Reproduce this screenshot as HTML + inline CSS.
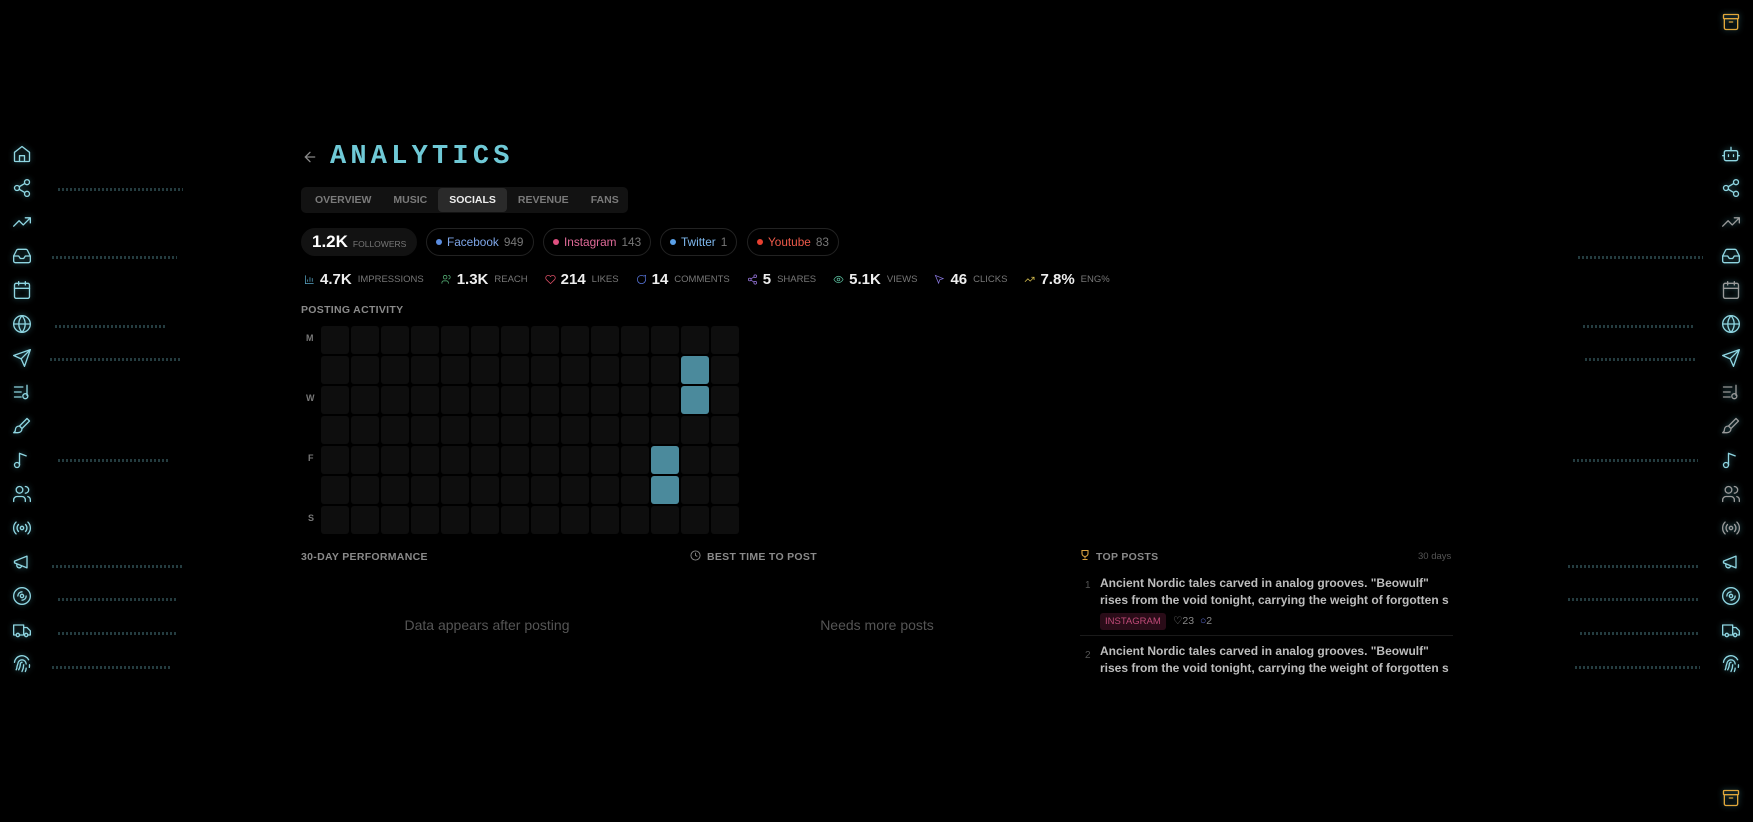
<!DOCTYPE html>
<html><head><meta charset="utf-8"><style>
*{margin:0;padding:0;box-sizing:border-box}
body{width:1753px;height:822px;background:#000;font-family:"Liberation Sans",sans-serif;color:#ddd;position:relative;overflow:hidden}
.abs{position:absolute}
.side svg{position:absolute;width:20px;height:20px;fill:none;stroke:#8fd6e2;stroke-width:1.6;stroke-linecap:round;stroke-linejoin:round;filter:drop-shadow(0 0 3px rgba(90,200,220,.5))}
.title{left:330px;top:142px;font-family:"Liberation Mono",monospace;font-weight:bold;font-size:27px;letter-spacing:4.2px;color:#6fc9d6}
.tabs{left:301px;top:187px;width:327px;height:26px;background:#121212;border-radius:5px;display:flex;align-items:center;padding:0 3px}
.tabs div{font-size:10.5px;font-weight:bold;color:#7a7a7a;padding:6px 11px;border-radius:4px}
.tabs .on{background:#2a2a2a;color:#eee}
.pill{top:228px;height:28px;border:1px solid #222;border-radius:14px;display:flex;align-items:center;padding:0 9px;font-size:11.8px;gap:5px}
.pill i{width:6px;height:6px;border-radius:50%;display:inline-block}
.pill span.n{color:#777}
.stats{left:304px;top:271px;display:flex;align-items:center;font-size:9.5px;color:#777}
.stats b{color:#eee;font-size:15px;margin:0 6px 0 5px}
.stats .s{display:flex;align-items:center;margin-right:17px}
.stats svg{width:11px;height:11px;fill:none;stroke-width:1.6}
.lbl{font-size:10.5px;font-weight:bold;color:#8a8a8a;letter-spacing:.3px}
.cell{position:absolute;width:28px;height:28px;background:#0e0e0e;border-radius:3px}
.hl{background:#4b8a9c}
.post{font-size:12px;font-weight:bold;color:#bdbdbd;line-height:17px;white-space:nowrap;overflow:hidden;width:353px}
.glow{position:absolute;height:3px;background:repeating-linear-gradient(90deg,rgba(120,200,210,.3) 0 2px,transparent 2px 4px)}
</style></head><body>

<div class="glow" style="left:58px;top:188px;width:125px"></div>
<div class="glow" style="left:52px;top:256px;width:125px"></div>
<div class="glow" style="left:55px;top:325px;width:110px"></div>
<div class="glow" style="left:50px;top:358px;width:130px"></div>
<div class="glow" style="left:58px;top:459px;width:110px"></div>
<div class="glow" style="left:52px;top:565px;width:130px"></div>
<div class="glow" style="left:58px;top:598px;width:120px"></div>
<div class="glow" style="left:58px;top:632px;width:120px"></div>
<div class="glow" style="left:52px;top:666px;width:120px"></div>
<div class="glow" style="left:1578px;top:256px;width:125px"></div>
<div class="glow" style="left:1583px;top:325px;width:110px"></div>
<div class="glow" style="left:1585px;top:358px;width:110px"></div>
<div class="glow" style="left:1573px;top:459px;width:125px"></div>
<div class="glow" style="left:1568px;top:565px;width:130px"></div>
<div class="glow" style="left:1568px;top:598px;width:130px"></div>
<div class="glow" style="left:1580px;top:632px;width:120px"></div>
<div class="glow" style="left:1575px;top:666px;width:125px"></div>

<div class="side">
<svg style="left:12px;top:144px" viewBox="0 0 24 24"><path d="M3 10l9-7 9 7v10a1 1 0 0 1-1 1H4a1 1 0 0 1-1-1z"/><path d="M9 21v-7h6v7"/></svg>
<svg style="left:12px;top:178px" viewBox="0 0 24 24"><circle cx="18" cy="5" r="3"/><circle cx="6" cy="12" r="3"/><circle cx="18" cy="19" r="3"/><path d="M8.6 13.5l6.8 4M15.4 6.5l-6.8 4"/></svg>
<svg style="left:12px;top:212px" viewBox="0 0 24 24"><path d="M22 7l-8.5 8.5-5-5L2 17M16 7h6v6"/></svg>
<svg style="left:12px;top:246px" viewBox="0 0 24 24"><path d="M22 12h-6l-2 3h-4l-2-3H2"/><path d="M5.5 5.1L2 12v6a2 2 0 0 0 2 2h16a2 2 0 0 0 2-2v-6l-3.5-6.9A2 2 0 0 0 16.8 4H7.2a2 2 0 0 0-1.7 1.1z"/></svg>
<svg style="left:12px;top:280px" viewBox="0 0 24 24"><rect x="3" y="4" width="18" height="18" rx="2"/><path d="M16 2v4M8 2v4M3 10h18"/></svg>
<svg style="left:12px;top:314px" viewBox="0 0 24 24"><circle cx="12" cy="12" r="10"/><path d="M2 12h20M12 2a15 15 0 0 1 0 20a15 15 0 0 1 0-20"/></svg>
<svg style="left:12px;top:348px" viewBox="0 0 24 24"><path d="M22 2L11 13M22 2l-7 20-4-9-9-4z"/></svg>
<svg style="left:12px;top:382px" viewBox="0 0 24 24"><path d="M3 6h10M3 12h8M3 18h8M18 4v12"/><circle cx="16" cy="17" r="3"/></svg>
<svg style="left:12px;top:416px" viewBox="0 0 24 24"><path d="M18 3l3 3-9 9-3-3zM9 12c-3 0-5 2-5 5 0 2-2 3-2 3h5c3 0 5-2 5-5"/></svg>
<svg style="left:12px;top:450px" viewBox="0 0 24 24"><path d="M9 18V4l8 3"/><circle cx="6" cy="18" r="3"/></svg>
<svg style="left:12px;top:484px" viewBox="0 0 24 24"><circle cx="9" cy="7" r="4"/><path d="M2 21v-2a4 4 0 0 1 4-4h6a4 4 0 0 1 4 4v2M16 3a4 4 0 0 1 0 8M22 21v-2a4 4 0 0 0-3-3.9"/></svg>
<svg style="left:12px;top:518px" viewBox="0 0 24 24"><circle cx="12" cy="12" r="2"/><path d="M16.2 7.8a6 6 0 0 1 0 8.4M7.8 16.2a6 6 0 0 1 0-8.4M19.1 4.9a10 10 0 0 1 0 14.2M4.9 19.1a10 10 0 0 1 0-14.2"/></svg>
<svg style="left:12px;top:552px" viewBox="0 0 24 24"><path d="M3 11l15-6v14L3 13zM11.6 16.8a3 3 0 1 1-5.8-1.6"/></svg>
<svg style="left:12px;top:586px" viewBox="0 0 24 24"><circle cx="12" cy="12" r="10"/><circle cx="12" cy="12" r="2"/><path d="M7 12a5 5 0 0 1 5-5M17 12a5 5 0 0 1-5 5"/></svg>
<svg style="left:12px;top:620px" viewBox="0 0 24 24"><path d="M14 18V6H2v12h2M15 18H9M14 9h4l4 4v5h-2"/><circle cx="7" cy="18" r="2"/><circle cx="17" cy="18" r="2"/></svg>
<svg style="left:12px;top:654px" viewBox="0 0 24 24"><path d="M12 10a2 2 0 0 0-2 2c0 3-1 5-2 7M14 13c0 3-1 6-2 8M17 17c0 1-.5 3-1 4M6 15c1-3 1-4 1-3a5 5 0 0 1 10 0M3 10a9 9 0 0 1 17-3M21 13c0 1 0 2-.2 3M5 19c.5-1 1-2 1-4"/></svg>
</div>

<div class="side">
<svg style="left:1721px;top:12px;stroke:#e0a63a" viewBox="0 0 24 24"><rect x="3" y="3" width="18" height="5" rx="1"/><path d="M4 8v11a2 2 0 0 0 2 2h12a2 2 0 0 0 2-2V8M10 12h4"/></svg>
<svg style="left:1721px;top:144px" viewBox="0 0 24 24"><rect x="4" y="8" width="16" height="12" rx="2"/><path d="M12 8V4M9 13v2M15 13v2M2 14h2M20 14h2"/></svg>
<svg style="left:1721px;top:178px" viewBox="0 0 24 24"><circle cx="18" cy="5" r="3"/><circle cx="6" cy="12" r="3"/><circle cx="18" cy="19" r="3"/><path d="M8.6 13.5l6.8 4M15.4 6.5l-6.8 4"/></svg>
<svg style="left:1721px;top:212px;stroke:#999" viewBox="0 0 24 24"><path d="M22 7l-8.5 8.5-5-5L2 17M16 7h6v6"/></svg>
<svg style="left:1721px;top:246px" viewBox="0 0 24 24"><path d="M22 12h-6l-2 3h-4l-2-3H2"/><path d="M5.5 5.1L2 12v6a2 2 0 0 0 2 2h16a2 2 0 0 0 2-2v-6l-3.5-6.9A2 2 0 0 0 16.8 4H7.2a2 2 0 0 0-1.7 1.1z"/></svg>
<svg style="left:1721px;top:280px;stroke:#999" viewBox="0 0 24 24"><rect x="3" y="4" width="18" height="18" rx="2"/><path d="M16 2v4M8 2v4M3 10h18"/></svg>
<svg style="left:1721px;top:314px" viewBox="0 0 24 24"><circle cx="12" cy="12" r="10"/><path d="M2 12h20M12 2a15 15 0 0 1 0 20a15 15 0 0 1 0-20"/></svg>
<svg style="left:1721px;top:348px" viewBox="0 0 24 24"><path d="M22 2L11 13M22 2l-7 20-4-9-9-4z"/></svg>
<svg style="left:1721px;top:382px;stroke:#999" viewBox="0 0 24 24"><path d="M3 6h10M3 12h8M3 18h8M18 4v12"/><circle cx="16" cy="17" r="3"/></svg>
<svg style="left:1721px;top:416px;stroke:#999" viewBox="0 0 24 24"><path d="M18 3l3 3-9 9-3-3zM9 12c-3 0-5 2-5 5 0 2-2 3-2 3h5c3 0 5-2 5-5"/></svg>
<svg style="left:1721px;top:450px" viewBox="0 0 24 24"><path d="M9 18V4l8 3"/><circle cx="6" cy="18" r="3"/></svg>
<svg style="left:1721px;top:484px;stroke:#999" viewBox="0 0 24 24"><circle cx="9" cy="7" r="4"/><path d="M2 21v-2a4 4 0 0 1 4-4h6a4 4 0 0 1 4 4v2M16 3a4 4 0 0 1 0 8M22 21v-2a4 4 0 0 0-3-3.9"/></svg>
<svg style="left:1721px;top:518px;stroke:#999" viewBox="0 0 24 24"><circle cx="12" cy="12" r="2"/><path d="M16.2 7.8a6 6 0 0 1 0 8.4M7.8 16.2a6 6 0 0 1 0-8.4M19.1 4.9a10 10 0 0 1 0 14.2M4.9 19.1a10 10 0 0 1 0-14.2"/></svg>
<svg style="left:1721px;top:552px" viewBox="0 0 24 24"><path d="M3 11l15-6v14L3 13zM11.6 16.8a3 3 0 1 1-5.8-1.6"/></svg>
<svg style="left:1721px;top:586px" viewBox="0 0 24 24"><circle cx="12" cy="12" r="10"/><circle cx="12" cy="12" r="2"/><path d="M7 12a5 5 0 0 1 5-5M17 12a5 5 0 0 1-5 5"/></svg>
<svg style="left:1721px;top:620px" viewBox="0 0 24 24"><path d="M14 18V6H2v12h2M15 18H9M14 9h4l4 4v5h-2"/><circle cx="7" cy="18" r="2"/><circle cx="17" cy="18" r="2"/></svg>
<svg style="left:1721px;top:654px" viewBox="0 0 24 24"><path d="M12 10a2 2 0 0 0-2 2c0 3-1 5-2 7M14 13c0 3-1 6-2 8M17 17c0 1-.5 3-1 4M6 15c1-3 1-4 1-3a5 5 0 0 1 10 0M3 10a9 9 0 0 1 17-3M21 13c0 1 0 2-.2 3M5 19c.5-1 1-2 1-4"/></svg>
<svg style="left:1721px;top:788px;stroke:#e0a63a" viewBox="0 0 24 24"><rect x="3" y="3" width="18" height="5" rx="1"/><path d="M4 8v11a2 2 0 0 0 2 2h12a2 2 0 0 0 2-2V8M10 12h4"/></svg>
</div>

<svg class="abs" style="left:302px;top:149px;width:16px;height:16px" viewBox="0 0 24 24" fill="none" stroke="#888" stroke-width="2" stroke-linecap="round"><path d="M19 12H5M12 19l-7-7 7-7"/></svg>
<div class="abs title">ANALYTICS</div>

<div class="abs tabs"><div>OVERVIEW</div><div>MUSIC</div><div class="on">SOCIALS</div><div>REVENUE</div><div>FANS</div></div>

<div class="abs pill" style="left:301px;width:116px;background:#121212;border-color:#121212;gap:5px;padding:0 10px"><b style="font-size:17px;color:#fff">1.2K</b><span style="font-size:8.5px;color:#777;margin-top:4px">FOLLOWERS</span></div>
<div class="abs pill" style="left:426px"><i style="background:#5b8de0"></i><span style="color:#7ea6e8">Facebook</span><span class="n">949</span></div>
<div class="abs pill" style="left:543px"><i style="background:#e05080"></i><span style="color:#e06a98">Instagram</span><span class="n">143</span></div>
<div class="abs pill" style="left:660px"><i style="background:#5aa0e8"></i><span style="color:#7eb8ee">Twitter</span><span class="n">1</span></div>
<div class="abs pill" style="left:747px"><i style="background:#e84030"></i><span style="color:#ee5a4a">Youtube</span><span class="n">83</span></div>

<div class="abs stats">
<div class="s"><svg viewBox="0 0 24 24" stroke="#5aa8c8"><path d="M3 3v18h18M8 17v-5M13 17V7M18 17v-8"/></svg><b>4.7K</b>IMPRESSIONS</div>
<div class="s"><svg viewBox="0 0 24 24" stroke="#5cc080"><circle cx="9" cy="7" r="4"/><path d="M2 21v-2a4 4 0 0 1 4-4h6a4 4 0 0 1 4 4v2M16 3a4 4 0 0 1 0 8"/></svg><b>1.3K</b>REACH</div>
<div class="s"><svg viewBox="0 0 24 24" stroke="#e05068"><path d="M20.8 4.6a5.5 5.5 0 0 0-7.8 0L12 5.7l-1-1.1a5.5 5.5 0 0 0-7.8 7.8L12 21l8.8-8.6a5.5 5.5 0 0 0 0-7.8z"/></svg><b>214</b>LIKES</div>
<div class="s"><svg viewBox="0 0 24 24" stroke="#5a78e0"><path d="M21 12a9 9 0 1 1-4-7.5L21 3l-1 4a9 9 0 0 1 1 5z"/></svg><b>14</b>COMMENTS</div>
<div class="s"><svg viewBox="0 0 24 24" stroke="#9a78e0"><circle cx="18" cy="5" r="3"/><circle cx="6" cy="12" r="3"/><circle cx="18" cy="19" r="3"/><path d="M8.6 13.5l6.8 4M15.4 6.5l-6.8 4"/></svg><b>5</b>SHARES</div>
<div class="s"><svg viewBox="0 0 24 24" stroke="#5cc0a0"><path d="M2 12s4-7 10-7 10 7 10 7-4 7-10 7S2 12 2 12z"/><circle cx="12" cy="12" r="3"/></svg><b>5.1K</b>VIEWS</div>
<div class="s"><svg viewBox="0 0 24 24" stroke="#8a78e0"><path d="M3 3l7 17 2.5-7.5L20 10z"/></svg><b>46</b>CLICKS</div>
<div class="s"><svg viewBox="0 0 24 24" stroke="#d8c050"><path d="M22 7l-8.5 8.5-5-5L2 17M16 7h6v6"/></svg><b>7.8%</b>ENG%</div>
</div>

<div class="abs lbl" style="left:301px;top:304px">POSTING ACTIVITY</div>
<div class="abs" style="left:306px;top:333px;font-size:9px;font-weight:bold;color:#777">M</div>
<div class="abs" style="left:306px;top:393px;font-size:9px;font-weight:bold;color:#777">W</div>
<div class="abs" style="left:308px;top:453px;font-size:9px;font-weight:bold;color:#777">F</div>
<div class="abs" style="left:308px;top:513px;font-size:9px;font-weight:bold;color:#777">S</div>
<div id="grid"></div>
<script>
var g=document.getElementById('grid'),h='';
for(var r=0;r<7;r++)for(var c=0;c<14;c++){var on=(c==12&&(r==1||r==2))||(c==11&&(r==4||r==5));
h+='<div class="cell'+(on?' hl':'')+'" style="left:'+(321+c*30)+'px;top:'+(326+r*30)+'px"></div>';}
g.innerHTML=h;
</script>

<div class="abs lbl" style="left:301px;top:551px">30-DAY PERFORMANCE</div>
<svg class="abs" style="left:690px;top:550px;width:11px;height:11px" viewBox="0 0 24 24" fill="none" stroke="#888" stroke-width="2"><circle cx="12" cy="12" r="10"/><path d="M12 6v6l4 2"/></svg>
<div class="abs lbl" style="left:707px;top:551px">BEST TIME TO POST</div>
<div class="abs" style="left:387px;top:617px;width:200px;text-align:center;font-size:14px;color:#555">Data appears after posting</div>
<div class="abs" style="left:777px;top:617px;width:200px;text-align:center;font-size:14px;color:#555">Needs more posts</div>

<svg class="abs" style="left:1079px;top:549px;width:12px;height:12px" viewBox="0 0 24 24" fill="none" stroke="#d8a040" stroke-width="2.2"><path d="M6 3h12v6a6 6 0 0 1-12 0zM12 15v4M7 21h10"/></svg>
<div class="abs lbl" style="left:1096px;top:551px">TOP POSTS</div>
<div class="abs" style="left:1418px;top:551px;font-size:9.5px;color:#555">30 days</div>

<div class="abs" style="left:1085px;top:580px;font-size:10px;color:#555">1</div>
<div class="abs post" style="left:1100px;top:575px">Ancient Nordic tales carved in analog grooves. "Beowulf"</div>
<div class="abs post" style="left:1100px;top:592px">rises from the void tonight, carrying the weight of forgotten s</div>
<div class="abs" style="left:1100px;top:613px;background:#2a0c18;color:#c04a78;font-size:9.5px;padding:3px 5px;border-radius:3px">INSTAGRAM</div>
<div class="abs" style="left:1173px;top:615px;font-size:10.5px;color:#888">♡23 &nbsp;<span style="color:#5a6ad0">○</span>2</div>
<div class="abs" style="left:1080px;top:635px;width:373px;height:1px;background:#1a1a1a"></div>
<div class="abs" style="left:1085px;top:650px;font-size:10px;color:#555">2</div>
<div class="abs post" style="left:1100px;top:643px">Ancient Nordic tales carved in analog grooves. "Beowulf"</div>
<div class="abs post" style="left:1100px;top:660px">rises from the void tonight, carrying the weight of forgotten s</div>
</body></html>
